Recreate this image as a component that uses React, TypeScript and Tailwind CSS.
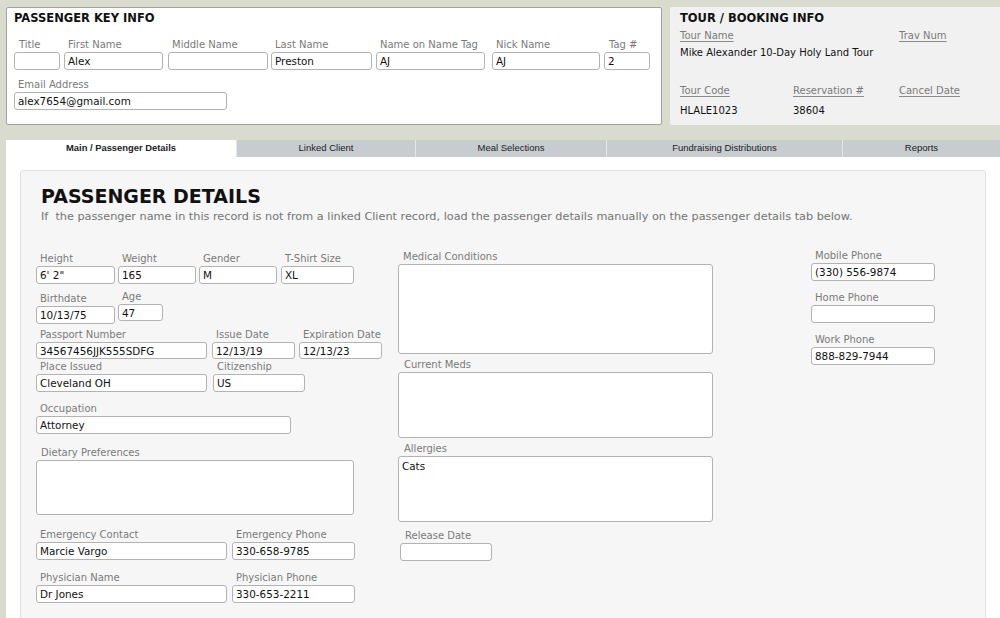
import React from "react";

// ---------------------------------------------------------------------------
// Small building blocks
// ---------------------------------------------------------------------------

type FieldProps = {
  label: string;
  value?: string;
  w: number | string;
  h?: string;
  ml?: string;
  boxClass?: string;
  labelClass?: string;
};

function Field({ label, value = "", w, h = "h-[18px]", ml = "", boxClass = "", labelClass = "" }: FieldProps) {
  return (
    <div className={`flex flex-col ${ml}`} style={{ width: w }}>
      <div className={`h-[12px] pl-[4px] text-[10px] leading-[12px] text-[#7a7a7a] whitespace-nowrap ${labelClass}`}>
        {label}
      </div>
      <div
        className={`mt-[1px] ${h} rounded-[3px] border border-[#b3b3b3] bg-white px-[3px] text-[10.4px] leading-[16px] text-[#111] whitespace-nowrap overflow-hidden ${boxClass}`}
      >
        {value}
      </div>
    </div>
  );
}

function Area({ label, value = "", w, h, ml = "", labelClass = "" }: FieldProps) {
  return (
    <div className={`flex flex-col ${ml}`} style={{ width: w }}>
      <div className={`h-[12px] pl-[5px] text-[10px] leading-[12px] text-[#7a7a7a] whitespace-nowrap ${labelClass}`}>
        {label}
      </div>
      <div
        className={`mt-[1px] ${h} rounded-[3px] border border-[#b3b3b3] bg-white px-[3px] pt-[3px] text-[10.4px] leading-[12px] text-[#111]`}
      >
        {value}
      </div>
    </div>
  );
}

function InfoLabel({ children }: { children: React.ReactNode }) {
  return (
    <div className="h-[12px] text-[10px] leading-[12px] text-[#7a7a7a] underline underline-offset-[2px] decoration-[#8a8a8a]">
      {children}
    </div>
  );
}

const TABS = [
  { label: "Main / Passenger Details", w: 230, active: true },
  { label: "Linked Client", w: 179 },
  { label: "Meal Selections", w: 191 },
  { label: "Fundraising Distributions", w: 236 },
  { label: "Reports", w: 158 },
];

// ---------------------------------------------------------------------------
// App
// ---------------------------------------------------------------------------

export default function App() {
  return (
    <div
      className="w-[1000px] h-[618px] overflow-hidden bg-[#dadbcf] flex flex-col"
      style={{ fontFamily: '"DejaVu Sans", Verdana, sans-serif' }}
    >
      {/* Top panels */}
      <div className="flex pt-[7px] pl-[6px] shrink-0">
        {/* Passenger key info */}
        <div className="w-[656px] h-[118px] rounded-[2px] border border-[#a3a3a3] bg-white pl-[7px] pt-[3px]">
          <div className="h-[14px] text-[11.5px] leading-[14px] font-bold text-[#111]">PASSENGER KEY INFO</div>
          <div className="mt-[14px] flex">
            <Field label="Title" w={46} labelClass="pl-[5px]" />
            <Field label="First Name" value="Alex" w={99} ml="ml-[4px]" />
            <Field label="Middle Name" w={100} ml="ml-[5px]" />
            <Field label="Last Name" value="Preston" w={101} ml="ml-[3px]" />
            <Field label="Name on Name Tag" value="AJ" w={109} ml="ml-[4px]" />
            <Field label="Nick Name" value="AJ" w={108} ml="ml-[7px]" />
            <Field label="Tag #" value="2" w={46} ml="ml-[4px]" labelClass="pl-[5px]" />
          </div>
          <div className="mt-[9px] flex">
            <Field label="Email Address" value="alex7654@gmail.com" w={213} labelClass="pl-[3px]" />
          </div>
        </div>

        {/* Tour / booking info */}
        <div className="ml-[8px] flex-1 h-[118px] rounded-l-[2px] bg-[#f1f1f1] pl-[10px] pt-[4px]">
          <div className="h-[14px] text-[11.5px] leading-[14px] font-bold text-[#111]">TOUR / BOOKING INFO</div>
          <div className="mt-[5px] grid grid-cols-[113px_106px_1fr]">
            <div className="col-span-2">
              <InfoLabel>Tour Name</InfoLabel>
            </div>
            <InfoLabel>Trav Num</InfoLabel>
            <div className="col-span-2 mt-[5px] h-[12px] text-[10px] leading-[12px] text-[#111] whitespace-nowrap">
              Mike Alexander 10-Day Holy Land Tour
            </div>
            <div className="mt-[5px]" />
            <div className="mt-[26px]">
              <InfoLabel>Tour Code</InfoLabel>
            </div>
            <div className="mt-[26px]">
              <InfoLabel>Reservation #</InfoLabel>
            </div>
            <div className="mt-[26px]">
              <InfoLabel>Cancel Date</InfoLabel>
            </div>
            <div className="mt-[8px] text-[10px] leading-[12px] text-[#111]">HLALE1023</div>
            <div className="mt-[8px] text-[10px] leading-[12px] text-[#111]">38604</div>
            <div className="mt-[8px]" />
          </div>
        </div>
      </div>

      {/* Tabs */}
      <div className="mt-[15px] ml-[6px] flex h-[17px] shrink-0" style={{ fontFamily: '"Liberation Sans", Arial, sans-serif' }}>
        {TABS.map((t) => (
          <div
            key={t.label}
            style={{ width: t.w }}
            className={
              t.active
                ? "flex items-center justify-center bg-white text-[9.4px] font-bold text-[#222]"
                : "flex items-center justify-center border-l border-[#e4e6e8] bg-[#c7ccd0] text-[9.5px] text-[#222]"
            }
          >
            {t.label}
          </div>
        ))}
      </div>

      {/* Main tab body */}
      <div className="ml-[6px] flex-1 bg-white pl-[14px] pt-[13px]">
        <div className="w-[966px] h-[470px] rounded-[3px] border border-[#e2e2e2] bg-[#f6f6f6] pl-[15px]">
          <div className="ml-[5px] mt-[14px] h-[22px] text-[19px] leading-[22px] font-bold text-[#111]">
            PASSENGER DETAILS
          </div>
          <div className="ml-[5px] mt-[3px] h-[14px] text-[11.25px] leading-[14px] text-[#747474] whitespace-pre">
            {"If  the passenger name in this record is not from a linked Client record, load the passenger details manually on the passenger details tab below."}
          </div>

          <div className="mt-[26px] flex items-start">
            {/* Column 1 */}
            <div className="w-[346px] pt-[3px] flex flex-col">
              <div className="flex">
                <Field label="Height" value={`6' 2"`} w={79} />
                <Field label="Weight" value="165" w={78} ml="ml-[3px]" />
                <Field label="Gender" value="M" w={78} ml="ml-[3px]" />
                <Field label="T-Shirt Size" value="XL" w={73} ml="ml-[4px]" />
              </div>
              <div className="mt-[9px] flex items-start">
                <Field label="Birthdate" value="10/13/75" w={79} />
                <div className="-mt-[2px]">
                  <Field label="Age" value="47" w={45} ml="ml-[3px]" h="h-[17px]" />
                </div>
              </div>
              <div className="mt-[5px] flex">
                <Field label="Passport Number" value="34567456JJK555SDFG" w={171} h="h-[17px]" />
                <Field label="Issue Date" value="12/13/19" w={83} ml="ml-[5px]" h="h-[17px]" />
                <Field label="Expiration Date" value="12/13/23" w={83} ml="ml-[4px]" h="h-[17px]" labelClass="pl-[1px]" />
              </div>
              <div className="mt-[2px] flex">
                <Field label="Place Issued" value="Cleveland OH" w={171} />
                <Field label="Citizenship" value="US" w={92} ml="ml-[6px]" />
              </div>
              <div className="mt-[11px] flex">
                <Field label="Occupation" value="Attorney" w={255} />
              </div>
              <div className="mt-[13px] flex">
                <Area label="Dietary Preferences" w={318} h="h-[55px]" labelClass="pl-[4px]" />
              </div>
              <div className="mt-[14px] flex">
                <Field label="Emergency Contact" value="Marcie Vargo" w={191} />
                <Field label="Emergency Phone" value="330-658-9785" w={123} ml="ml-[5px]" />
              </div>
              <div className="mt-[12px] flex">
                <Field label="Physician Name" value="Dr Jones" w={191} />
                <Field label="Physician Phone" value="330-653-2211" w={123} ml="ml-[5px]" />
              </div>
            </div>

            {/* Column 2 */}
            <div className="ml-[16px] w-[315px] pt-[1px] flex flex-col">
              <Area label="Medical Conditions" w={315} h="h-[90px]" />
              <div className="mt-[5px]">
                <Area label="Current Meds" w={315} h="h-[66px]" labelClass="pl-[6px]" />
              </div>
              <div className="mt-[5px]">
                <Area label="Allergies" value="Cats" w={315} h="h-[66px]" labelClass="pl-[6px]" />
              </div>
              <div className="mt-[8px] ml-[2px]">
                <Field label="Release Date" w={92} labelClass="pl-[5px]" />
              </div>
            </div>

            {/* Column 3 */}
            <div className="ml-[98px] w-[124px] flex flex-col">
              <Field label="Mobile Phone" value="(330) 556-9874" w={124} />
              <div className="mt-[11px]">
                <Field label="Home Phone" w={124} />
              </div>
              <div className="mt-[11px]">
                <Field label="Work Phone" value="888-829-7944" w={124} />
              </div>
            </div>
          </div>
        </div>
      </div>
    </div>
  );
}
